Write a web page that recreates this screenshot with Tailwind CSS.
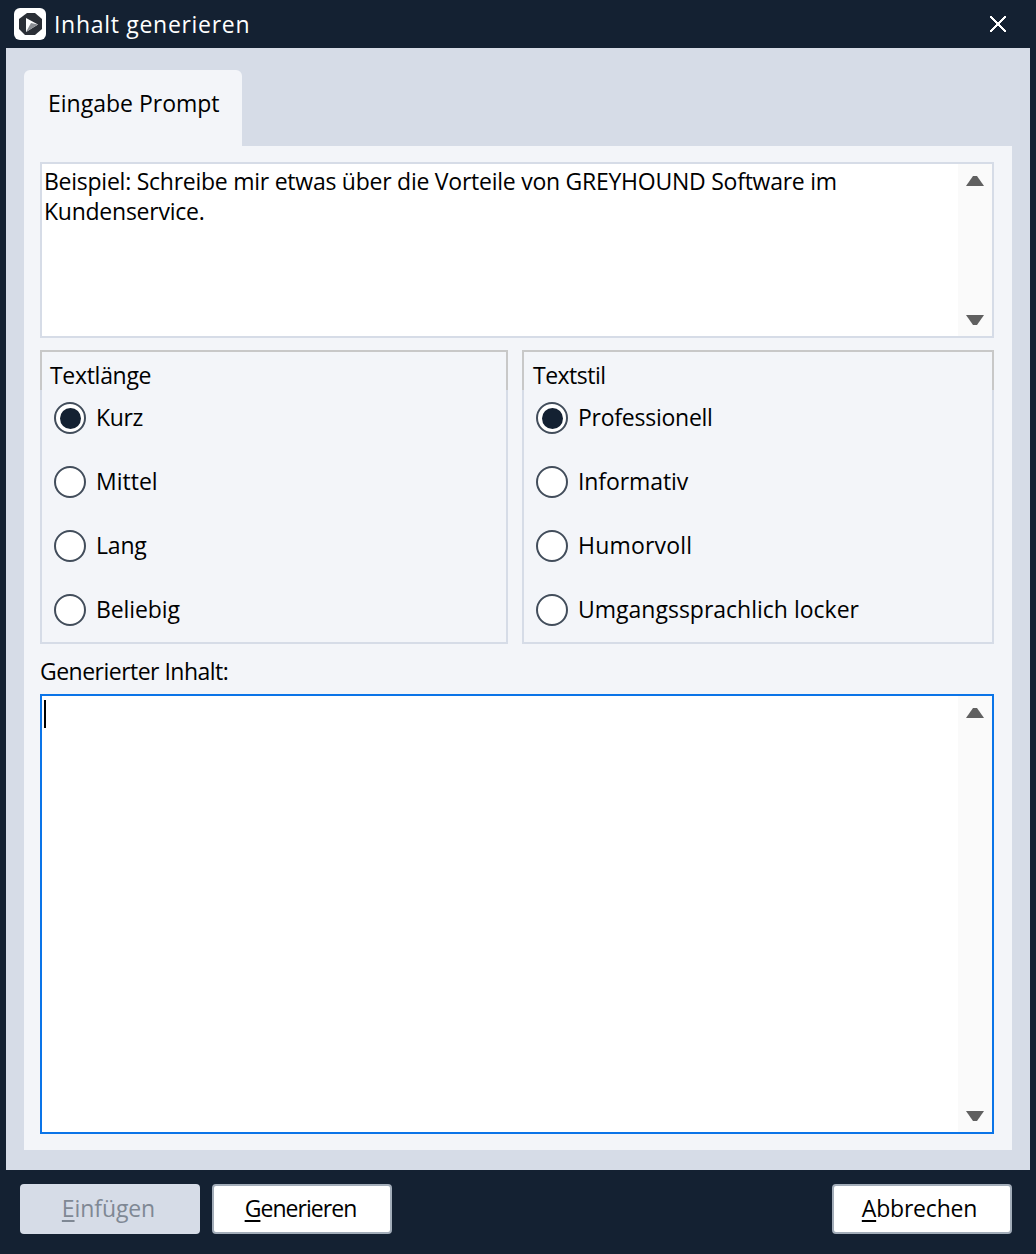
<!DOCTYPE html>
<html lang="de">
<head>
  <meta charset="UTF-8">
  <title>Inhalt generieren</title>
  <script src="https://cdn.jsdelivr.net/npm/@tailwindcss/browser@4"></script>
</head>
<body class="w-[1036px] h-[1254px] overflow-hidden bg-[#142132] font-['Open_Sans','Noto_Sans',sans-serif] text-[23px] leading-[30px] text-black">
  <!-- Titelleiste -->
  <div class="h-[48px] flex items-center pl-[14px] pr-[30px]">
    <svg class="w-[32px] h-[32px]" viewBox="0 0 32 32">
      <rect width="32" height="32" rx="6" fill="#fff"/>
      <path d="M13 5 L21 5 L28 11 L28 21 L21 27 L11 27 L5 21 L5 11 Z" fill="#2b2f36"/>
      <path d="M12 10 L24 16.5 L12 24 Z" fill="#fff"/>
      <path d="M12 24 L24 16.5 L17 15 Z" fill="#8a8d92"/>
    </svg>
    <span class="ml-[8px] text-white tracking-[0.7px]">Inhalt generieren</span>
    <svg class="ml-auto w-[16px] h-[16px]" viewBox="0 0 16 16" stroke="#fff" stroke-width="1.5" fill="none" shape-rendering="crispEdges">
      <path d="M0 0 L16 16 M16 0 L0 16"/>
    </svg>
  </div>

  <!-- Hauptbereich -->
  <div class="mx-[6px] h-[1122px] bg-[#d6dce7] px-[18px] pt-[22px]">
    <div class="w-[218px] h-[76px] bg-[#f3f5f9] rounded-t-[6px] pl-[24px] pt-[18px]">Eingabe Prompt</div>
    <div class="w-[988px] h-[1004px] bg-[#f3f5f9] pl-[16px] pr-[18px] pt-[16px]">
      <!-- Prompt -->
      <div class="h-[176px] flex bg-white border-2 border-[#d6dce7]">
        <div class="flex-1 pl-[2px] pt-[2px] tracking-[-0.25px]">Beispiel: Schreibe mir etwas über die Vorteile von GREYHOUND Software im Kundenservice.</div>
        <div class="w-[34px] bg-[#fafafa] flex flex-col items-center justify-between pt-[11px] pb-[10px]">
          <svg class="w-[18px] h-[11px]" viewBox="0 0 18 11"><path d="M0 11 L7 1 L11 1 L18 11 Z" fill="#606060"/></svg>
          <svg class="w-[18px] h-[11px]" viewBox="0 0 18 11"><path d="M0 0 L7 10 L11 10 L18 0 Z" fill="#606060"/></svg>
        </div>
      </div>

      <!-- Optionen -->
      <div class="mt-[12px] flex gap-[14px]">
        <div class="relative w-[468px] h-[294px] border-2 border-[#d6dce7] pl-[12px] pt-[34px]">
          <div class="absolute -left-[2px] -right-[2px] -top-[2px] h-[40px] border-2 border-b-0 border-[#c8c8c8]"></div>
          <div class="absolute left-[8px] top-[8px] tracking-[-0.3px]">Textlänge</div>
          <div class="flex flex-col">
            <div class="h-[64px] flex items-center gap-[10px]">
              <div class="w-[32px] h-[32px] rounded-full border-2 border-[#424d5b] bg-white flex items-center justify-center"><div class="w-[21px] h-[21px] rounded-full bg-[#142132]"></div></div>
              <span class="pb-[2px] tracking-[-0.4px]">Kurz</span>
            </div>
            <div class="h-[64px] flex items-center gap-[10px]">
              <div class="w-[32px] h-[32px] rounded-full border-2 border-[#424d5b] bg-white"></div>
              <span class="pb-[2px]">Mittel</span>
            </div>
            <div class="h-[64px] flex items-center gap-[10px]">
              <div class="w-[32px] h-[32px] rounded-full border-2 border-[#424d5b] bg-white"></div>
              <span class="pb-[2px] tracking-[-0.2px]">Lang</span>
            </div>
            <div class="h-[64px] flex items-center gap-[10px]">
              <div class="w-[32px] h-[32px] rounded-full border-2 border-[#424d5b] bg-white"></div>
              <span class="pb-[2px] tracking-[-0.1px]">Beliebig</span>
            </div>
          </div>
        </div>
        <div class="relative w-[472px] h-[294px] border-2 border-[#d6dce7] pl-[12px] pt-[34px]">
          <div class="absolute -left-[2px] -right-[2px] -top-[2px] h-[40px] border-2 border-b-0 border-[#c8c8c8]"></div>
          <div class="absolute left-[9px] top-[8px] tracking-[-0.5px]">Textstil</div>
          <div class="flex flex-col">
            <div class="h-[64px] flex items-center gap-[10px]">
              <div class="w-[32px] h-[32px] rounded-full border-2 border-[#424d5b] bg-white flex items-center justify-center"><div class="w-[21px] h-[21px] rounded-full bg-[#142132]"></div></div>
              <span class="pb-[2px] tracking-[-0.25px]">Professionell</span>
            </div>
            <div class="h-[64px] flex items-center gap-[10px]">
              <div class="w-[32px] h-[32px] rounded-full border-2 border-[#424d5b] bg-white"></div>
              <span class="pb-[2px] tracking-[-0.1px]">Informativ</span>
            </div>
            <div class="h-[64px] flex items-center gap-[10px]">
              <div class="w-[32px] h-[32px] rounded-full border-2 border-[#424d5b] bg-white"></div>
              <span class="pb-[2px] tracking-[0.2px]">Humorvoll</span>
            </div>
            <div class="h-[64px] flex items-center gap-[10px]">
              <div class="w-[32px] h-[32px] rounded-full border-2 border-[#424d5b] bg-white"></div>
              <span class="pb-[2px]">Umgangssprachlich locker</span>
            </div>
          </div>
        </div>
      </div>

      <!-- Ergebnis -->
      <div class="mt-[12px] h-[38px] tracking-[-0.52px]">Generierter Inhalt:</div>
      <div class="h-[440px] flex bg-white border-2 border-[#0a74e8]">
        <div class="flex-1 pl-[2px] pt-[4px]"><div class="w-[2px] h-[28px] bg-black"></div></div>
        <div class="w-[34px] bg-[#fafafa] flex flex-col items-center justify-between pt-[11px] pb-[10px]">
          <svg class="w-[18px] h-[11px]" viewBox="0 0 18 11"><path d="M0 11 L7 1 L11 1 L18 11 Z" fill="#606060"/></svg>
          <svg class="w-[18px] h-[11px]" viewBox="0 0 18 11"><path d="M0 0 L7 10 L11 10 L18 0 Z" fill="#606060"/></svg>
        </div>
      </div>
    </div>
  </div>

  <!-- Schaltflächen -->
  <div class="mt-[14px] pl-[20px] pr-[24px] flex gap-[12px]">
    <button class="w-[180px] h-[50px] pb-[2px] pr-[3px] rounded-[4px] bg-[#d6dce7] text-[#7f8894] tracking-[-0.1px]"><span class="underline decoration-2 underline-offset-[3px]">E</span>infügen</button>
    <button class="w-[180px] h-[50px] pb-[2px] pr-[3px] rounded-[4px] bg-white border-2 border-[#a3adb9] tracking-[-0.95px]"><span class="underline decoration-2 underline-offset-[3px]">G</span>enerieren</button>
    <button class="ml-auto w-[180px] h-[50px] pb-[2px] pr-[5px] rounded-[4px] bg-white border-2 border-[#a3adb9] tracking-[-0.2px]"><span class="underline decoration-2 underline-offset-[3px]">A</span>bbrechen</button>
  </div>
</body>
</html>
